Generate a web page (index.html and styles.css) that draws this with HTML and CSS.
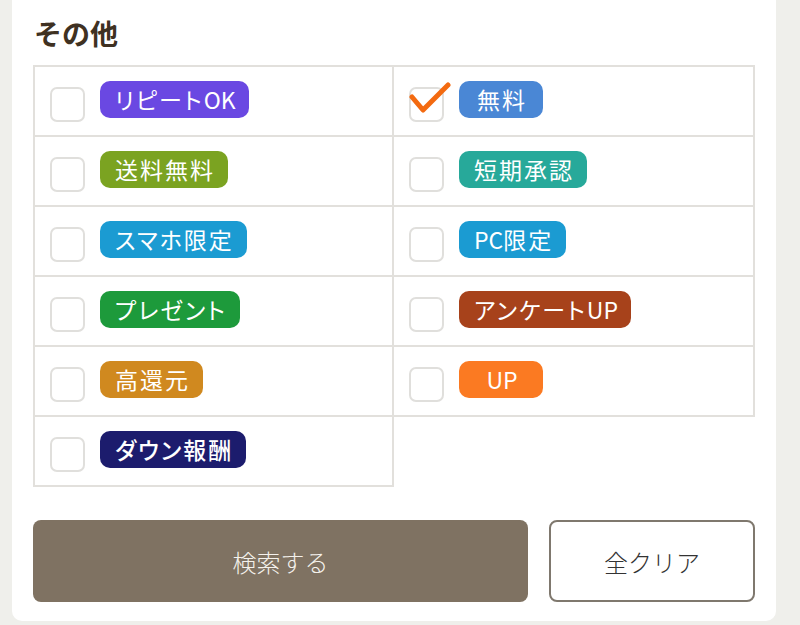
FILE: index.html
```html
<!DOCTYPE html>
<html lang="ja">

<head>
	<meta charset="UTF-8">
	<meta name="viewport" content="width=device-width, initial-scale=1.0">
	<title>その他</title>
	<link rel="stylesheet" href="styles.css">
</head>

<body>
	<div class="page">
		<div class="card">
			<h3 class="title">その他</h3>

			<div class="opts">
				<label class="opt"><span class="box"></span><span class="tag tag-purple">リピート<span class="en">OK</span></span></label>
				<label class="opt"><span class="box checked">
					<svg class="check" viewBox="0 0 44 36" width="44" height="36"><polyline points="3,16 14,29 39,4" /></svg>
				</span><span class="tag tag-blue">無料</span></label>
				<label class="opt"><span class="box"></span><span class="tag tag-olive">送料無料</span></label>
				<label class="opt"><span class="box"></span><span class="tag tag-teal">短期承認</span></label>
				<label class="opt"><span class="box"></span><span class="tag tag-sky">スマホ限定</span></label>
				<label class="opt"><span class="box"></span><span class="tag tag-sky"><span class="en">PC</span>限定</span></label>
				<label class="opt"><span class="box"></span><span class="tag tag-green">プレゼント</span></label>
				<label class="opt"><span class="box"></span><span class="tag tag-brown">アンケート<span class="en">UP</span></span></label>
				<label class="opt"><span class="box"></span><span class="tag tag-amber">高還元</span></label>
				<label class="opt"><span class="box"></span><span class="tag tag-orange"><span class="en">UP</span></span></label>
				<label class="opt"><span class="box"></span><span class="tag tag-navy">ダウン報酬</span></label>
			</div>

			<div class="actions">
				<button class="btn btn-search">検索する</button>
				<button class="btn btn-clear">全クリア</button>
			</div>
		</div>
	</div>
</body>

</html>
```

FILE: styles.css
```css
body {
	margin: 0;
	background: #efefeb;
	font-family: "Noto Sans CJK JP", "Noto Sans", sans-serif;
}

.page {
	padding: 0 24px 5px 12px;
}

.card {
	background: #fff;
	border-radius: 0 0 10px 10px;
	padding: 13px 21px 19px;
}

.title {
	margin: 0 0 12px 1px;
	font-size: 28px;
	line-height: 40px;
	font-weight: 700;
	color: #3f3122;
}

/* 2列のチェックボックス表 */
.opts {
	display: grid;
	grid-template-columns: 1fr 1fr;
}

.opt {
	display: flex;
	align-items: center;
	gap: 15px;
	height: 68px;
	padding-left: 15px;
	border-right: 2px solid #e2e0dc;
	border-bottom: 2px solid #e2e0dc;
}

.opt:nth-child(-n+2) {
	border-top: 2px solid #e2e0dc;
}

.opt:nth-child(odd) {
	border-left: 2px solid #e2e0dc;
}

.box {
	position: relative;
	flex: none;
	width: 31px;
	height: 31px;
	margin-top: 6px;
	border: 2px solid #e0dfdc;
	border-radius: 7px;
}

.check {
	position: absolute;
	left: -2px;
	top: -8px;
	fill: none;
	stroke: #f36a10;
	stroke-width: 5;
	stroke-linecap: round;
	stroke-linejoin: round;
}

.tag {
	display: inline-block;
	min-width: 84px;
	box-sizing: border-box;
	height: 37px;
	margin-top: -3px;
	line-height: 37px;
	padding: 0 13px 0 15px;
	border-radius: 10px;
	text-align: center;
	color: #fff;
	font-size: 23px;
	font-weight: 400;
	letter-spacing: 2px;
	font-feature-settings: "palt";
	white-space: nowrap;
}

.tag .en {
	letter-spacing: 0;
}

.tag-purple { background: #6a48e2; }
.tag-blue { background: #4a87d5; }
.tag-olive { background: #7ba321; }
.tag-teal { background: #27a99a; }
.tag-sky { background: #1b9bd2; }
.tag-green { background: #1d9a3b; }
.tag-brown { background: #a7421b; }
.tag-amber { background: #d0891f; }
.tag-orange { background: #fb7a22; }
.tag-navy { background: #1c1c6d; font-weight: 500; }

.actions {
	display: flex;
	gap: 21px;
	margin-top: 33px;
}

.btn {
	height: 82px;
	border-radius: 8px;
	font-family: inherit;
	font-size: 24px;
	font-weight: 300;
	cursor: pointer;
}

.btn-search {
	flex: 1;
	border: none;
	background: #7f7262;
	color: #f4f1ec;
}

.btn-clear {
	width: 206px;
	border: 2px solid #7f786e;
	background: #fff;
	color: #333;
}
```
